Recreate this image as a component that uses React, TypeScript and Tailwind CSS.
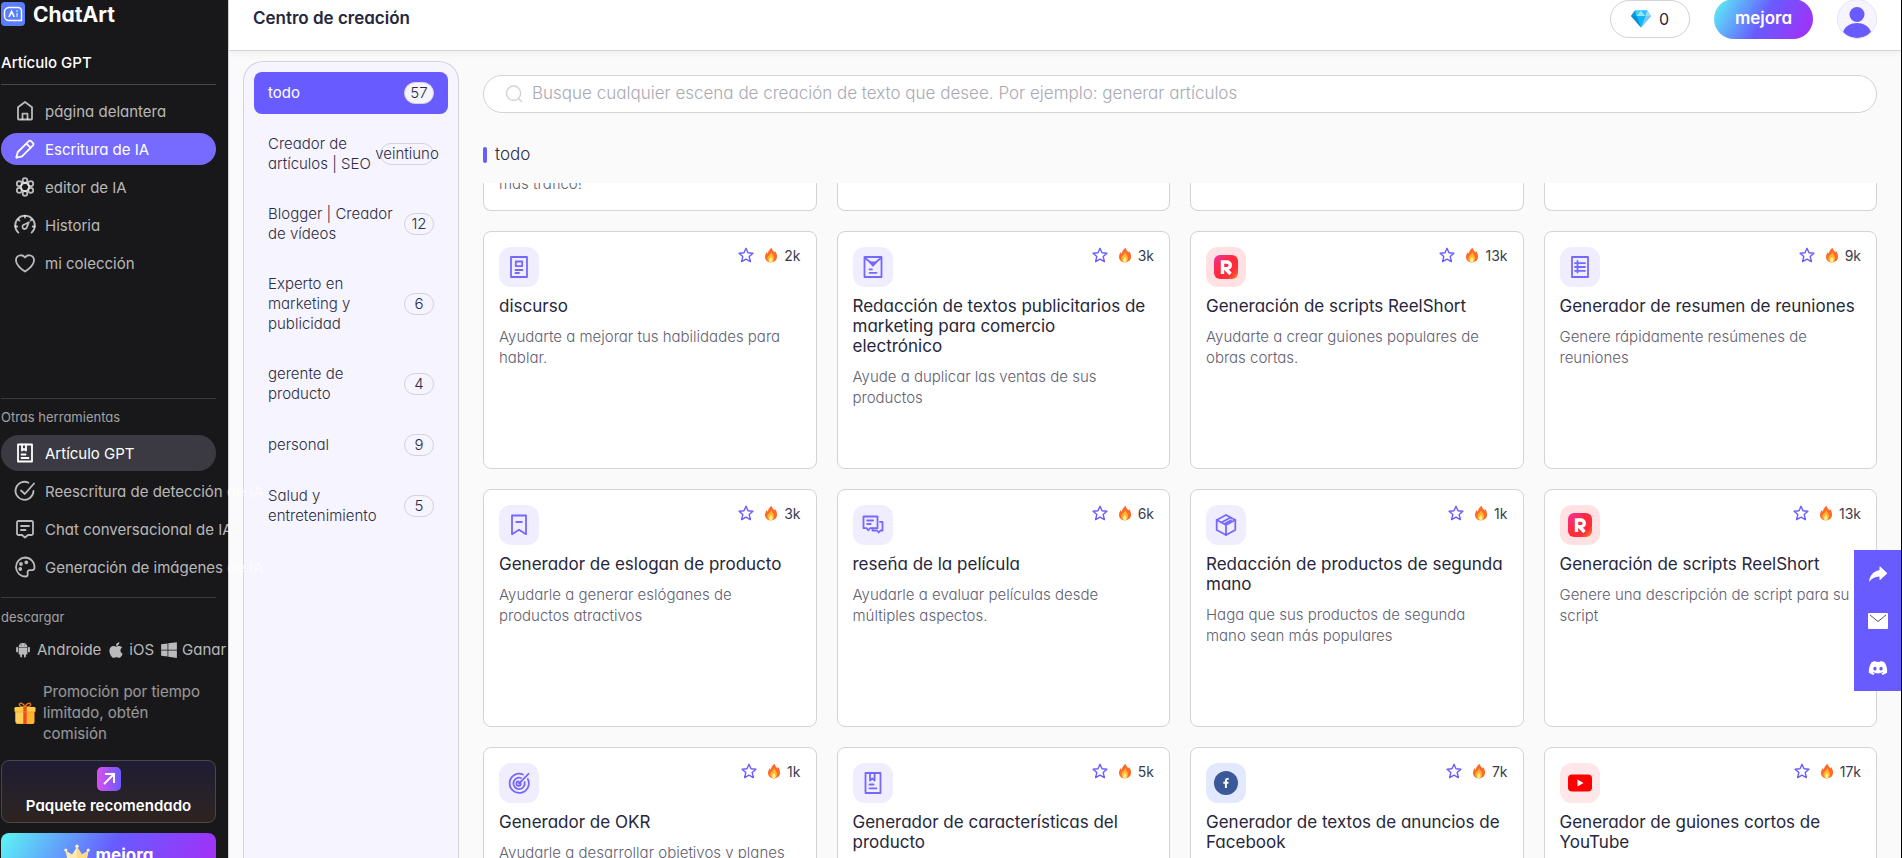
import React, { ReactNode } from "react";
import { FaApple, FaWindows, FaDiscord, FaFacebookF } from "react-icons/fa";
import { IoIosShareAlt, IoLogoAndroid } from "react-icons/io";

type IconProps = { className?: string; children?: ReactNode };

function Stroke({ className = "size-6 shrink-0", children }: IconProps) {
  return (
    <svg
      viewBox="0 0 24 24"
      className={className}
      fill="none"
      stroke="currentColor"
      strokeWidth="1.8"
      strokeLinecap="round"
      strokeLinejoin="round"
      aria-hidden="true"
    >
      {children}
    </svg>
  );
}

/* ---------- Sidebar icons ---------- */

const HomeIcon = () => (
  <Stroke>
    <path d="M5 8.200 12 3l7 5.200V19.500a1 1 0 0 1-1 1H6a1 1 0 0 1-1-1z" />
    <path d="M9.500 20v-5.300h5V20" />
  </Stroke>
);
const PencilIcon = () => (
  <Stroke>
    <path d="M15.800 4.200a1.600 1.600 0 0 1 2.300 0l1.900 1.900a1.600 1.600 0 0 1 0 2.300L9 19.300l-5.200 1.400a.4.4 0 0 1-.5-.5L4.800 15z" />
    <path d="m13.400 6.600 4.100 4.100" />
  </Stroke>
);
const AtomIcon = () => (
  <Stroke>
    <circle cx="12" cy="12" r="4" />
    <circle cx="12" cy="5.500" r="2.300" />
    <circle cx="12" cy="18.500" r="2.300" />
    <circle cx="6.300" cy="8.700" r="2.500" />
    <circle cx="17.700" cy="8.700" r="2.500" />
    <circle cx="6.300" cy="15.300" r="2.500" />
    <circle cx="17.700" cy="15.300" r="2.500" />
  </Stroke>
);
const GaugeIcon = () => (
  <Stroke>
    <path d="M5.400 19.600A9.800 9.800 0 1 1 18.600 19.600" />
    <path d="M12 2.800v1.800M2.300 13.500h2M19.700 13.500h2M5.200 6.300l1.200 1.200M18.800 6.300l-1.200 1.200" />
    <path d="m15.800 9.300-4.800 2.400a2.200 2.200 0 1 0 2.700 2.900z" />
  </Stroke>
);
const HeartIcon = () => (
  <Stroke>
    <path d="M12 20.500S3 15.200 3 9.200a4.900 4.900 0 0 1 9-2.700 4.900 4.900 0 0 1 9 2.700c0 6-9 11.300-9 11.300z" />
  </Stroke>
);
const CheckIcon = () => (
  <Stroke>
    <path d="M15.500 3.700A9 9 0 1 0 20.500 12" />
    <path d="m8 11.500 3.800 3.500L21 4.500" />
  </Stroke>
);
const ChatIcon = () => (
  <Stroke>
    <path d="M5.500 4h13A1.500 1.500 0 0 1 20 5.500v11a1.500 1.500 0 0 1-1.500 1.500H15l-3 2.500L9 18H5.500A1.500 1.500 0 0 1 4 16.500v-11A1.500 1.500 0 0 1 5.500 4z" />
    <path d="M8 9h8M8 13h4.500" />
  </Stroke>
);
const PaletteIcon = () => (
  <Stroke>
    <path d="M12 2.500a9.500 9.500 0 1 0 1 19c1.500-.2 2-1.500 1.600-2.900-.5-2 .6-3.400 2.400-3.400h2.200c1.600 0 2.300-1.300 2.300-2.900A9.600 9.600 0 0 0 12 2.500z" />
    <circle cx="8" cy="9" r="1" />
    <circle cx="13.300" cy="7.300" r="1" />
    <circle cx="7.300" cy="14" r="1" />
  </Stroke>
);
const BookmarkedDoc = () => (
  <Stroke>
    <path d="M5 3.500h14v17H5z" />
    <path d="M9 3.500v6l2-1.500 2 1.500v-6M8.500 13.500h4M8.500 17h7" />
  </Stroke>
);

function Logo() {
  return (
    <svg viewBox="0 0 24 24" className="size-6" aria-hidden="true">
      <rect width="24" height="24" rx="4" fill="#5b7dff" />
      <path
        d="M8 5.500h9a3.500 3.500 0 0 1 3.500 3.500v9.500H8A4.500 4.500 0 0 1 3.500 14v-4A4.500 4.500 0 0 1 8 5.500z"
        fill="none"
        stroke="#fff"
        strokeWidth="1.400"
      />
      <path d="m8 15 2.600-5.500L13.200 15" fill="none" stroke="#fff" strokeWidth="1.700" />
      <path d="M16 11v4" stroke="#9fe3ff" strokeWidth="1.500" />
      <circle cx="16" cy="9" r="1" fill="#8ff0d8" />
    </svg>
  );
}

function Gift() {
  return (
    <svg viewBox="0 0 22 22" className="size-[22px] shrink-0" aria-hidden="true">
      <path d="M11 5C8 5 4.500 4 5.500 2S10 2 11 5c1-3 4.500-5 5.500-3S14 5 11 5z" fill="none" stroke="#e8761e" strokeWidth="1.300" />
      <rect x="1.500" y="9" width="19" height="13" rx="2" fill="#ffb52e" />
      <rect x=".5" y="5" width="21" height="5" rx="1.200" fill="#ffc94a" />
      <path d="M1.500 10h8v11h-6a2 2 0 0 1-2-2z" fill="#ffcf5c" />
      <path d="M9.300 5h3.400v17H9.300z" fill="#f04a23" />
      <path d="M.5 10h21" stroke="#e8921e" strokeWidth=".6" />
    </svg>
  );
}

function Crown() {
  return (
    <svg viewBox="0 0 26 22" className="h-[22px] w-[26px]" aria-hidden="true">
      <path d="M4 19 1.500 6.500l6.500 4L13 3l5 7.500 6.500-4L22 19z" fill="#ffe9b0" />
      <path d="M13 3v16h9l2.500-12.500-6.500 4z" fill="#ffd98a" />
      <circle cx="13" cy="2.200" r="1.700" fill="#fff1c9" />
      <circle cx="1.800" cy="6" r="1.600" fill="#fff1c9" />
      <circle cx="24.200" cy="6" r="1.600" fill="#fff1c9" />
    </svg>
  );
}

function Gem() {
  return (
    <svg viewBox="0 0 20 18" className="h-[18px] w-5" aria-hidden="true">
      <path d="M4 .5h12l4 5.500-10 11.500L0 6z" fill="#12b5f5" />
      <path d="M4 .5 0 6h5.500z" fill="#0d9be0" />
      <path d="M4 .5h6L5.500 6z" fill="#3fd0fa" />
      <path d="m10 .5 4.500 5.500h-9z" fill="#8fe6ff" />
      <path d="M10 .5h6L14.500 6z" fill="#2cc2f8" />
      <path d="m16 .5 4 5.500h-5.500z" fill="#9cd8ff" />
      <path d="m14.500 6H20L10 17.500z" fill="#7cc8ff" />
      <path d="M0 6h5.500L10 17.500z" fill="#0a8fd6" />
    </svg>
  );
}

/* ---------- Card icons ---------- */

const SpeechDoc = () => (
  <Stroke>
    <path d="M4 2h16v20H4z" />
    <path d="M8.800 6.500h6.400v4.700H8.800zM8.500 15h7M8.500 18h3.500" />
  </Stroke>
);
const MailDoc = () => (
  <Stroke>
    <path d="M3.500 2h17v20h-17z" />
    <path d="m4 3 8 6.500L20 3" />
    <path d="m9 7.500 3 3.200 3-3.200z" fill="currentColor" />
    <path d="M8.500 14.300H11M8.500 17.800h7" />
  </Stroke>
);
const ListDoc = () => (
  <Stroke>
    <path d="M4 2h16v20H4z" />
    <path d="M9.500 6v11.500M7 8.200h10M7 12h10M7 15.800h10" />
  </Stroke>
);
const SloganIcon = () => (
  <Stroke>
    <path d="M5 2.500h14v18.700l-7-4.500-7 4.500z" />
    <path d="M9.200 9h5.600" />
  </Stroke>
);
const ReviewIcon = () => (
  <Stroke>
    <path d="M2.500 3.500h14v11.700H9L7.300 17.300 5.500 15.200h-3z" />
    <path d="M6.200 7.500h6M6.200 11h3.500M19 8.800h2.500v8.700h-2L17.700 19.500 16 17.500h-4.500v-2" />
  </Stroke>
);
const BoxIcon = () => (
  <Stroke>
    <path d="m12 2 9.300 5v10L12 22l-9.300-5V7z" />
    <path d="m2.700 7 9.300 5 9.300-5M12 12v10M7.300 9.500l9.200-5M11 10.500l6-3.300" />
  </Stroke>
);
const TargetIcon = () => (
  <Stroke>
    <path d="M16 3.500A9.600 9.600 0 1 0 20.800 8" />
    <path d="M14 7a5.700 5.700 0 1 0 3.600 4" />
    <path d="M11.500 10.500a2.200 2.200 0 1 0 2.300 2.200M12 12.500 21.500 2.800" />
  </Stroke>
);
const FeatureIcon = () => (
  <Stroke>
    <path d="M4.500 2h15v20h-15z" />
    <path d="M9 2v7.500l2.300-2 2.300 2V2M8.500 13.500h4M8.500 17.300h7" />
  </Stroke>
);
const ReelIcon = () => (
  <svg viewBox="0 0 24 24" className="size-6" aria-hidden="true">
    <defs>
      <linearGradient id="reel" x1="0" y1="0" x2="1" y2="1">
        <stop offset="0" stopColor="#f030a0" />
        <stop offset=".45" stopColor="#ff2a3c" />
        <stop offset=".75" stopColor="#ff2f3a" />
        <stop offset="1" stopColor="#ff8a2a" />
      </linearGradient>
    </defs>
    <rect width="24" height="24" rx="6" fill="url(#reel)" />
    <path d="M8.500 19V7H13a3.300 3.300 0 0 1 0 6.600h-1.500L16.500 19" fill="none" stroke="#fff" strokeWidth="3.400" />
  </svg>
);
const FbIcon = () => (
  <span className="flex size-6 items-center justify-center rounded-full bg-[#3b5998] text-white">
    <FaFacebookF className="size-[10px]" />
  </span>
);
const YtIcon = () => (
  <svg viewBox="0 0 24 24" className="size-6" aria-hidden="true">
    <rect y="3.500" width="24" height="17" rx="4" fill="#f00" />
    <path d="m9.500 8.500 6 3.500-6 3.500z" fill="#fff" />
  </svg>
);

const StarIcon = () => (
  <svg viewBox="0 0 16 16" className="size-4" fill="none" stroke="#685bff" strokeWidth="1.400" strokeLinejoin="round" aria-hidden="true">
    <path d="m8 1.300 2 4.500 4.900.5-3.700 3.300 1.200 5L8 12.200l-4.400 2.400 1.200-5L1.100 6.300 6 5.800z" />
  </svg>
);
const FlameIcon = () => (
  <svg viewBox="0 0 14 16" className="h-4 w-[14px]" aria-hidden="true">
    <path d="M7.500.8c.6 2.200 2 3.400 3 4.700.3-.5.400-1 .3-1.700 1.500 1.600 2.300 3.700 2.200 6C12.900 13 10.700 15.300 7 15.300S1 13 1 10c0-2.100 1-3.600 1.800-5 .2.800.5 1.300 1 1.700C4 4.300 5.500 2.500 7.500.8z" fill="#ff6a2a" />
    <path d="M7.300 5c.3 2 2.700 3.300 2.700 6.300 0 2.300-1.300 4-3.200 4S3.300 13.700 3.300 11.500C3.300 8.800 6.500 8 7.300 5z" fill="#ffb52e" />
    <path d="M7 9.500c.2 1.100 1.600 1.800 1.600 3.500 0 1.400-.8 2.300-1.800 2.300S5 14.500 5 13.200c0-1.500 1.600-2.200 2-3.700z" fill="#fff08a" />
  </svg>
);

/* ---------- Data ---------- */

const mainNav = [
  { label: "página delantera", icon: <HomeIcon />, active: false },
  { label: "Escritura de IA", icon: <PencilIcon />, active: true },
  { label: "editor de IA", icon: <AtomIcon />, active: false },
  { label: "Historia", icon: <GaugeIcon />, active: false },
  { label: "mi colección", icon: <HeartIcon />, active: false },
];

const toolNav = [
  { label: "Reescritura de detección de IA", icon: <CheckIcon /> },
  { label: "Chat conversacional de IA", icon: <ChatIcon /> },
  { label: "Generación de imágenes de IA", icon: <PaletteIcon /> },
];

const categories = [
  { label: "todo", count: "57", active: true },
  { label: "Creador de artículos | SEO", count: "veintiuno", wide: true },
  { label: "Blogger | Creador de vídeos", count: "12" },
  { label: "Experto en marketing y publicidad", count: "6" },
  { label: "gerente de producto", count: "4" },
  { label: "personal", count: "9" },
  { label: "Salud y entretenimiento", count: "5" },
];

const violet = "bg-[#f0edff] text-[#7468ff]";

const cards = [
  { title: "discurso", text: "Ayudarte a mejorar tus habilidades para hablar.", heat: "2k", icon: <SpeechDoc />, tile: violet },
  { title: "Redacción de textos publicitarios de marketing para comercio\nelectrónico", text: "Ayude a duplicar las ventas de sus productos", heat: "3k", icon: <MailDoc />, tile: violet },
  { title: "Generación de scripts ReelShort", text: "Ayudarte a crear guiones populares de obras cortas.", heat: "13k", icon: <ReelIcon />, tile: "bg-[#ffe1e4]" },
  { title: "Generador de resumen de reuniones", text: "Genere rápidamente resúmenes de reuniones", heat: "9k", icon: <ListDoc />, tile: violet },
  { title: "Generador de eslogan de producto", text: "Ayudarle a generar eslóganes de productos atractivos", heat: "3k", icon: <SloganIcon />, tile: violet },
  { title: "reseña de la película", text: "Ayudarle a evaluar películas desde múltiples aspectos.", heat: "6k", icon: <ReviewIcon />, tile: violet },
  { title: "Redacción de productos de segunda mano", text: "Haga que sus productos de segunda mano sean más populares", heat: "1k", icon: <BoxIcon />, tile: violet },
  { title: "Generación de scripts ReelShort", text: "Genere una descripción de script para su script", heat: "13k", icon: <ReelIcon />, tile: "bg-[#ffe1e4]" },
  { title: "Generador de OKR", text: "Ayudarle a desarrollar objetivos y planes", heat: "1k", icon: <TargetIcon />, tile: violet },
  { title: "Generador de características del producto", text: "", heat: "5k", icon: <FeatureIcon />, tile: violet },
  { title: "Generador de textos de anuncios de Facebook", text: "", heat: "7k", icon: <FbIcon />, tile: "bg-[#e2e9ff]" },
  { title: "Generador de guiones cortos de YouTube", text: "", heat: "17k", icon: <YtIcon />, tile: "bg-[#ffe6e8]" },
];

/* ---------- Sections ---------- */

function Sidebar() {
  return (
    <aside className="relative z-10 flex h-full w-[228px] shrink-0 flex-col bg-[#18181a] pl-px pr-3 text-[15px] leading-[21px] text-white/70">
      <a href="#" className="flex h-7 shrink-0 items-center gap-2 text-[21px] font-bold text-white">
        <Logo />
        ChatArt
      </a>
      <h2 className="flex h-[57px] shrink-0 items-center border-b border-[#48484a] pt-[13px] font-medium text-white">Artículo GPT</h2>
      <nav className="mt-[10px] flex shrink-0 flex-col gap-[6px] whitespace-nowrap">
        {mainNav.map((item) => (
          <a
            key={item.label}
            href="#"
            className={
              item.active
                ? "flex h-8 items-center gap-2 rounded-full bg-[#776bff] pl-3 text-white"
                : "flex h-8 items-center gap-2 rounded-full pl-3"
            }
          >
            {item.icon}
            {item.label}
          </a>
        ))}
      </nav>

      <h3 className="mt-[119px] flex h-[37px] shrink-0 items-center border-t border-[#3a3a3c] text-[13px] text-white/60">Otras herramientas</h3>
      <nav className="flex shrink-0 flex-col gap-[2px] whitespace-nowrap">
        <a href="#" className="flex h-9 items-center gap-2 rounded-full bg-[#3b3a43] pl-3 text-white">
          <BookmarkedDoc />
          Artículo GPT
        </a>
        {toolNav.map((item) => (
          <a key={item.label} href="#" className="flex h-9 items-center gap-2 pl-3">
            {item.icon}
            {item.label}
          </a>
        ))}
      </nav>

      <h3 className="mt-3 flex h-[39px] shrink-0 items-center border-t border-[#3a3a3c] text-[13px] text-white/60">descargar</h3>
      <div className="flex h-[27px] shrink-0 items-center gap-[6px] pl-3 whitespace-nowrap">
        <a href="#" className="flex items-center gap-1">
          <IoLogoAndroid className="size-5" />
          Androide
        </a>
        <a href="#" className="flex items-center gap-1">
          <FaApple className="size-[18px]" />
          iOS
        </a>
        <a href="#" className="flex items-center gap-1">
          <FaWindows className="size-[18px]" />
          Ganar
        </a>
      </div>
      <a href="#" className="mt-[18px] flex shrink-0 items-center gap-[7px] pr-3 pl-[13px] text-white/55">
        <Gift />
        <span>Promoción por tiempo limitado, obtén comisión</span>
      </a>
      <button
        type="button"
        className="mt-4 flex h-[63px] shrink-0 flex-col items-center gap-1 rounded-lg border border-[#48484a] bg-linear-to-b from-[#201c33] to-[#2d2420] pt-[6px] font-semibold text-white"
      >
        <svg viewBox="0 0 24 24" className="size-6 shrink-0" fill="none" aria-hidden="true">
          <defs>
            <linearGradient id="pkg" x1="0" y1="0" x2="1" y2="0">
              <stop stopColor="#d94fee" />
              <stop offset="1" stopColor="#6b5bff" />
            </linearGradient>
          </defs>
          <rect width="24" height="24" rx="5" fill="url(#pkg)" />
          <path d="M7 17 16.500 7.500M8 7h9v9" stroke="#fff" strokeWidth="2" />
        </svg>
        Paquete recomendado
      </button>
      <button
        type="button"
        className="mt-[10px] flex h-11 shrink-0 items-center justify-center gap-[6px] rounded-lg bg-linear-[120deg,#5bf7f5,#685bff_50%,#a82cf5] text-[17px] font-bold text-white"
      >
        <Crown />
        mejora
      </button>
    </aside>
  );
}

function Header() {
  return (
    <header className="relative flex h-[51px] shrink-0 items-center border-b border-[#d3d3d8] bg-white pr-6 pb-3 pl-6 shadow-[0_2px_8px_rgba(0,0,0,0.05)]">
      <h1 className="grow text-[17px] font-semibold text-[#26263c]">Centro de creación</h1>
      <button type="button" className="flex h-[38px] w-20 items-center justify-center gap-2 rounded-full border border-[#d3d3d8] text-[16px] text-[#26263c]">
        <Gem />
        0
      </button>
      <button type="button" className="-my-px ml-6 h-10 w-[99px] rounded-full bg-linear-[120deg,#5bf7f5,#685bff_50%,#a82cf5] text-[17px] font-semibold text-white">
        mejora
      </button>
      <button type="button" aria-label="Cuenta" className="-my-px ml-6 size-10 overflow-hidden rounded-full border border-[#e6e3f5] bg-[#f6f4ff]">
        <svg viewBox="0 0 38 38" className="size-full" fill="#685bff" aria-hidden="true">
          <circle cx="19" cy="14.500" r="7.500" />
          <path d="M5 32c2-6 8-9 14-9s12 3 14 9c-3 4-8 6-14 6s-11-2-14-6z" />
        </svg>
      </button>
    </header>
  );
}

function Categories() {
  return (
    <nav className="flex w-[216px] shrink-0 flex-col gap-[10px] rounded-t-[20px] border border-b-0 border-[#d3d3d8] bg-[#f6f4ff] p-[10px] text-[15px] leading-5 font-light text-[#2c2d42]">
      {categories.map((c) => (
        <button
          key={c.label}
          type="button"
          className={
            c.active
              ? "flex min-h-[42px] items-center justify-between gap-1 rounded-lg bg-[#685bff] py-[10px] px-[14px] text-left text-white"
              : "flex min-h-[42px] items-center justify-between gap-1 rounded-lg py-[10px] px-[14px] text-left"
          }
        >
          <span className={c.active ? "min-w-0 grow font-normal" : "min-w-0 grow"}>{c.label}</span>
          <span
            className={
              c.wide
                ? "flex h-[22px] w-[54px] shrink-0 items-center justify-center rounded-full border border-[#d3d3d8] bg-[#f6f4ff] text-[#2c2d42]"
                : "flex h-[22px] w-[30px] shrink-0 items-center justify-center rounded-full border border-[#d3d3d8] bg-[#f6f4ff] text-[#2c2d42]"
            }
          >
            {c.count}
          </span>
        </button>
      ))}
    </nav>
  );
}

function Card({ title, text, heat, icon, tile }: (typeof cards)[number]) {
  return (
    <article className="h-[238px] rounded-lg border border-[#d3d3d8] bg-white p-[15px]">
      <div className="flex items-start justify-between">
        <span className={`flex size-10 items-center justify-center rounded-xl ${tile}`}>{icon}</span>
        <div className="flex h-4 items-center text-[14px] text-[#3a3b50]">
          <button type="button" aria-label="Favorito" className="mr-[10px]">
            <StarIcon />
          </button>
          <FlameIcon />
          <span className="ml-[6px]">{heat}</span>
        </div>
      </div>
      <h3 className="mt-[9px] text-[17px] leading-5 whitespace-pre-line text-[#26263c]">{title}</h3>
      <p className="mt-[10px] text-[15px] leading-[21px] font-light text-[#5f6072]">{text}</p>
    </article>
  );
}

export default function App() {
  return (
    <div className="flex h-screen overflow-hidden bg-[#fafafa] font-['Inter','Noto_Sans',sans-serif] [font-feature-settings:'cv11']">
      <Sidebar />
      <div className="relative flex min-w-0 grow flex-col border-r border-l border-r-black border-l-[#d3d3d8]">
        <Header />
        <div className="flex min-h-0 grow gap-6 pr-6 pl-[14px]">
          <div className="flex pt-[10px]">
            <Categories />
          </div>
          <main className="flex min-w-0 grow flex-col pt-6">
            <label className="flex h-[38px] shrink-0 items-center gap-2 rounded-full border border-[#d3d3d8] bg-white pr-6 pl-5">
              <Stroke className="size-5 shrink-0 text-[#d3d3d8]">
                <circle cx="11.500" cy="11" r="8.500" />
                <path d="m18 18 3 3" />
              </Stroke>
              <input
                type="text"
                aria-label="Buscar"
                placeholder="Busque cualquier escena de creación de texto que desee. Por ejemplo: generar artículos"
                className="grow bg-transparent text-[17px] font-light outline-none placeholder:text-[#a9a9b4]"
              />
            </label>
            <h2 className="flex h-[70px] shrink-0 items-center gap-2 pt-[14px] text-[17px] font-light text-[#2c2d42]">
              <span className="h-4 w-1 rounded-xs bg-[#685bff]" />
              todo
            </h2>
            <div className="grid min-h-0 grow grid-cols-4 content-start gap-5 overflow-hidden">
              {["más tráfico!", "", "", ""].map((tail, i) => (
                <div key={i} className="h-7 overflow-hidden rounded-b-lg border border-t-0 border-[#d3d3d8] bg-white px-[15px]">
                  <p className="-mt-[10px] text-[15px] leading-[21px] font-light text-[#5f6072]">{tail}</p>
                </div>
              ))}
              {cards.map((c, i) => (
                <Card key={i} {...c} />
              ))}
            </div>
          </main>
        </div>
        <div className="absolute top-[550px] right-0 flex w-[47px] flex-col bg-[#685bff] text-white">
          <a href="#" aria-label="Compartir" className="flex h-[47px] items-center justify-center">
            <IoIosShareAlt className="size-6" />
          </a>
          <a href="#" aria-label="Correo" className="flex h-[47px] items-center justify-center">
            <svg viewBox="0 0 20 16" className="h-4 w-5" aria-hidden="true">
              <rect width="20" height="16" rx="1" fill="#fff" />
              <path d="m2 2 8 6.500L18 2" fill="none" stroke="#55556a" strokeWidth="1" />
            </svg>
          </a>
          <a href="#" aria-label="Discord" className="flex h-[47px] items-center justify-center">
            <FaDiscord className="size-5" />
          </a>
        </div>
      </div>
    </div>
  );
}
